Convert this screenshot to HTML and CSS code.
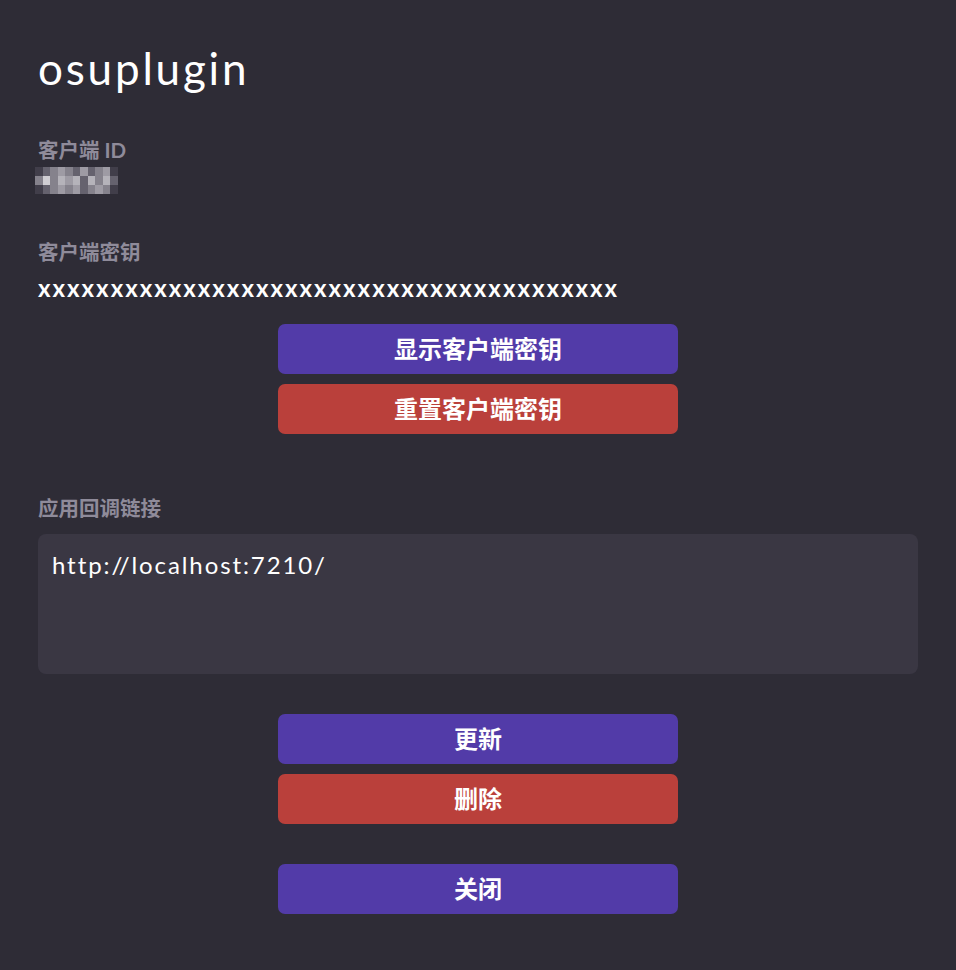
FILE: index.html
```html
<!DOCTYPE html>
<html lang="zh">
<head>
<meta charset="utf-8">
<link rel="stylesheet" href="styles.css">
</head>
<body>
<main class="page">
  <h1 class="title">osuplugin</h1>

  <section class="field field-id">
    <div class="label">客户端 ID</div>
    <div class="pixelated">
      <span class="px c0"></span><span class="px c1"></span><span class="px c2"></span><span class="px c3"></span><span class="px c2"></span><span class="px c1"></span><span class="px c3"></span><span class="px c1"></span><span class="px c2"></span><span class="px c3"></span><span class="px c0"></span>
      <span class="px c2"></span><span class="px c5"></span><span class="px c2"></span><span class="px c4"></span><span class="px c3"></span><span class="px c4"></span><span class="px c1"></span><span class="px c4"></span><span class="px c2"></span><span class="px c4"></span><span class="px c1"></span>
      <span class="px c0"></span><span class="px c1"></span><span class="px c2"></span><span class="px c3"></span><span class="px c2"></span><span class="px c3"></span><span class="px c1"></span><span class="px c2"></span><span class="px c3"></span><span class="px c2"></span><span class="px c0"></span>
    </div>
  </section>

  <section class="field field-secret">
    <div class="label">客户端密钥</div>
    <div class="secret">xxxxxxxxxxxxxxxxxxxxxxxxxxxxxxxxxxxxxxxx</div>
  </section>

  <div class="actions actions-secret">
    <button class="btn btn-primary">显示客户端密钥</button>
    <button class="btn btn-danger">重置客户端密钥</button>
  </div>

  <section class="field field-callback">
    <div class="label">应用回调链接</div>
    <div class="textarea">http://localhost:7210/</div>
  </section>

  <div class="actions actions-app">
    <button class="btn btn-primary">更新</button>
    <button class="btn btn-danger">删除</button>
  </div>

  <div class="actions actions-close">
    <button class="btn btn-primary">关闭</button>
  </div>
</main>
</body>
</html>
```

FILE: styles.css
```css
html, body {
  margin: 0;
  padding: 0;
  background: #2e2c36;
}

body {
  width: 956px;
  height: 970px;
  overflow: hidden;
  font-family: Lato, "Noto Sans", "Noto Sans CJK SC", sans-serif;
  color: #ffffff;
}

.page {
  display: flex;
  flex-direction: column;
  padding: 42px 38px 0 38px;
}

.title {
  margin: 0;
  font-family: Lato, sans-serif;
  font-weight: 400;
  font-size: 44px;
  line-height: 52px;
  letter-spacing: 2.8px;
  color: #ffffff;
}

.label {
  font-family: Lato, "Noto Sans CJK SC", sans-serif;
  font-weight: 700;
  font-size: 20.5px;
  line-height: 24px;
  color: #8f8b9a;
}

.field-id {
  margin-top: 44px;
}

.pixelated {
  margin-top: 5px;
  display: grid;
  grid-template-columns: repeat(11, 7.5px);
  grid-auto-rows: 9px;
  width: 83px;
  margin-left: -3px;
}

.px { display: block; }
.px.c0 { background: #413e4a; }
.px.c1 { background: #65626e; }
.px.c2 { background: #85828c; }
.px.c3 { background: #9e9ba4; }
.px.c4 { background: #b5b3ba; }
.px.c5 { background: #d0ced3; }

.field-secret {
  margin-top: 46px;
}

.secret {
  margin-top: 12px;
  font-family: Lato, sans-serif;
  font-size: 24px;
  line-height: 24px;
  font-weight: 700;
  letter-spacing: 2px;
  color: #ffffff;
}

.actions {
  display: flex;
  flex-direction: column;
  align-items: center;
  gap: 10px;
}

.actions-secret {
  margin-top: 24px;
}

.btn {
  width: 400px;
  height: 50px;
  border: none;
  border-radius: 7px;
  font-family: Lato, "Noto Sans CJK SC", sans-serif;
  font-weight: 700;
  font-size: 24px;
  line-height: 50px;
  color: #ffffff;
  padding: 0;
  cursor: pointer;
}

.btn-primary { background: #523ba8; }
.btn-danger { background: #ba403b; }

.field-callback {
  margin-top: 62px;
}

.textarea {
  margin-top: 14px;
  height: 140px;
  box-sizing: border-box;
  padding: 17px 14px;
  background: #3a3743;
  border-radius: 8px;
  font-family: Lato, sans-serif;
  font-size: 24px;
  line-height: 28px;
  letter-spacing: 1.9px;
  color: #ffffff;
}

.actions-app {
  margin-top: 40px;
}

.actions-close {
  margin-top: 40px;
}
```
